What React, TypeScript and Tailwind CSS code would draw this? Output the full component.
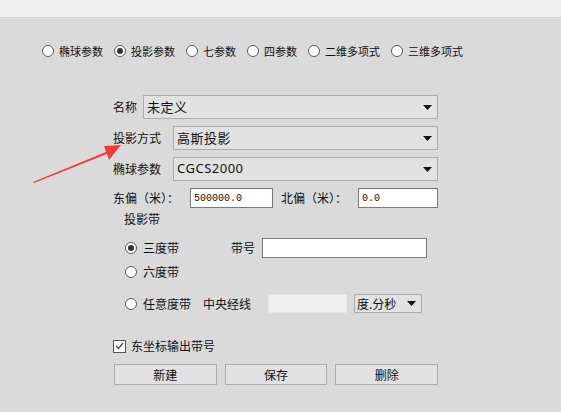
import React from "react";

const cjk = "font-['SimSun','Noto_Sans_CJK_SC',sans-serif]";

const topOptions = ["椭球参数", "投影参数", "七参数", "四参数", "二维多项式", "三维多项式"];

function Radio({ checked = false }: { checked?: boolean }) {
  return (
    <span className="grid size-[12px] shrink-0 place-items-center rounded-full border border-[#5a5a5a] bg-white">
      {checked && <span className="size-[6px] rounded-full bg-[#333333]" />}
    </span>
  );
}

function Caret() {
  return (
    <svg width="9" height="5" viewBox="0 0 9 5" className="shrink-0">
      <polygon points="0,0 9,0 4.5,5" fill="#111" />
    </svg>
  );
}

function Select({ value, className = "" }: { value: string; className?: string }) {
  return (
    <div
      className={`flex h-[24px] items-center justify-between border border-[#acacac] bg-[#e2e2e2] pl-[3px] pr-[5px] text-[13px] text-[#111] ${className}`}
    >
      <span className="tracking-[0.5px]">{value}</span>
      <Caret />
    </div>
  );
}

function TextInput({ value = "", className = "" }: { value?: string; className?: string }) {
  return (
    <div
      className={`flex h-[20px] items-center border border-[#7a7a7a] bg-white px-[3px] font-['Liberation_Mono',monospace] text-[10px] text-[#111] ${className}`}
    >
      {value}
    </div>
  );
}

export default function App() {
  return (
    <div className={`relative flex h-[412px] w-[561px] flex-col overflow-hidden bg-[#dadada] text-[12px] text-[#111] ${cjk}`}>
      <div className="h-[18px] shrink-0 border-b border-[#d0d0d0] bg-[#f0f0f0]" />

      <div className="mt-[25px] flex h-[16px] items-center pl-[42px] text-[11px]">
        {topOptions.map((label, i) => (
          <div key={label} className="mr-[11px] flex items-center gap-[5px]">
            <Radio checked={i === 1} />
            <span>{label}</span>
          </div>
        ))}
      </div>

      <div className="mt-[36px] flex w-[438px] flex-col pl-[113px]">
        <div className="flex items-center">
          <span className="w-[30px]">名称</span>
          <Select value="未定义" className="flex-1" />
        </div>
        <div className="mt-[7px] flex items-center">
          <span className="w-[60px]">投影方式</span>
          <Select value="高斯投影" className="flex-1" />
        </div>
        <div className="mt-[7px] flex items-center">
          <span className="w-[60px]">椭球参数</span>
          <Select value="CGCS2000" className="flex-1 font-['Noto_Sans',sans-serif]" />
        </div>
        <div className="mt-[7px] flex items-center">
          <span className="w-[77px]">东偏（米）：</span>
          <TextInput value="500000.0" className="w-[83px]" />
          <span className="ml-[8px] w-[77px]">北偏（米）：</span>
          <TextInput value="0.0" className="flex-1" />
        </div>

        <div className="mt-[4px] pl-[11px] leading-[14px]">投影带</div>

        <div className="mt-[12px] flex items-center pl-[12px]">
          <Radio checked />
          <span className="ml-[6px] w-[88px]">三度带</span>
          <span className="w-[31px]">带号</span>
          <TextInput className="w-[165px]" />
        </div>
        <div className="mt-[6px] flex h-[16px] items-center pl-[12px]">
          <Radio />
          <span className="ml-[6px]">六度带</span>
        </div>
        <div className="mt-[14px] flex items-center pl-[12px]">
          <Radio />
          <span className="ml-[6px] w-[60px]">任意度带</span>
          <span className="w-[65px]">中央经线</span>
          <div className="h-[19px] w-[79px] border border-[#e6e6e6] bg-[#efefef]" />
          <div className="ml-[7px] flex h-[19px] w-[68px] items-center justify-between border border-[#acacac] bg-[#e2e2e2] pl-[2px] pr-[5px]">
            <span>度.分秒</span>
            <Caret />
          </div>
        </div>

        <div className="mt-[24px] flex items-center gap-[5px]">
          <span className="grid size-[13px] place-items-center border border-[#555] bg-white">
            <svg width="9" height="8" viewBox="0 0 9 8">
              <polyline points="1,4 3.5,6.5 8,1" fill="none" stroke="#444" strokeWidth="1.3" />
            </svg>
          </span>
          <span>东坐标输出带号</span>
        </div>

        <div className="mt-[9px] flex gap-[8px] pl-[1px]">
          {["新建", "保存", "删除"].map((b) => (
            <div
              key={b}
              className="flex h-[21px] flex-1 items-center justify-center border border-[#adadad] bg-[#e1e1e1]"
            >
              {b}
            </div>
          ))}
        </div>
      </div>

      <svg className="pointer-events-none absolute left-0 top-0" width="561" height="412" viewBox="0 0 561 412">
        <polygon points="33,182 106,152 104,146 121,145 109,160 107,154 34,183" fill="#f23b3b" />
      </svg>
    </div>
  );
}
